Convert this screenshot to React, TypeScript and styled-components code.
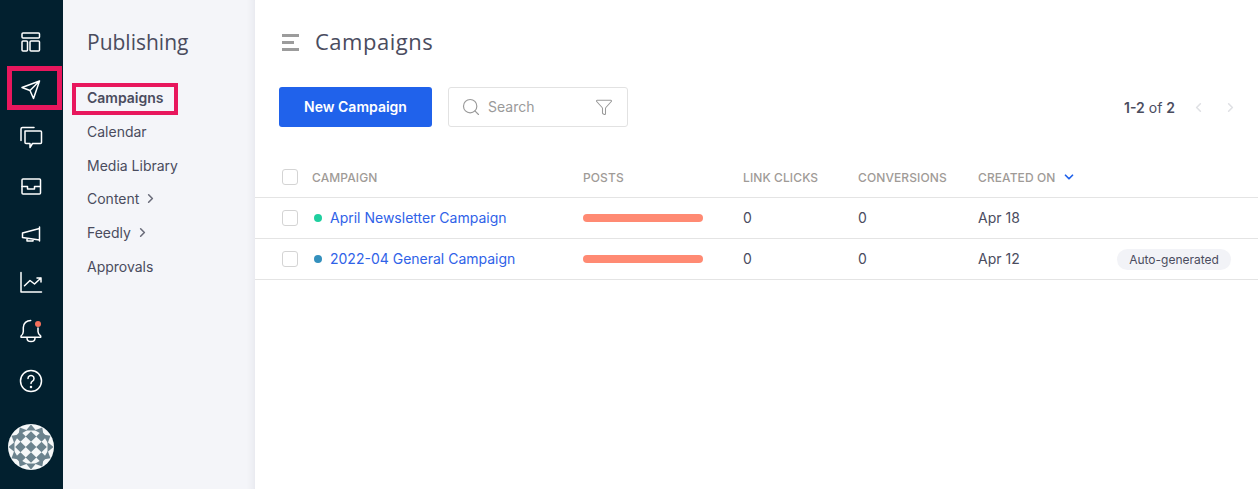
import React from 'react'
import styled, { createGlobalStyle } from 'styled-components'
import { ChevronRight, ChevronLeft, ChevronDown, Search, Filter } from 'lucide-react'

const GlobalStyle = createGlobalStyle`
  html, body {
    margin: 0;
    padding: 0;
    height: 100%;
    background: #fff;
    font-family: Inter, "Liberation Sans", sans-serif;
  }
  #root { height: 100%; }
`

const Page = styled.div`
  display: flex;
  width: 1258px;
  height: 489px;
  overflow: hidden;
`

const Rail = styled.nav`
  position: relative;
  width: 63px;
  flex-shrink: 0;
  background: #02202f;
  display: flex;
  flex-direction: column;
  align-items: center;
  padding: 18px 1px 0 0;
  box-sizing: border-box;
`

const RailIcon = styled.div<{ $nudge?: number }>`
  width: 48px;
  height: 48px;
  margin-top: ${p => p.$nudge || 0}px;
  display: flex;
  align-items: center;
  justify-content: center;
  color: #fff;
`

const RailHighlight = styled.div`
  position: absolute;
  left: 7px;
  top: 66px;
  width: 55px;
  height: 44px;
  box-sizing: border-box;
  border: 5px solid #e8175d;
`

const Avatar = styled.div`
  margin-top: 19px;
  width: 46px;
  height: 46px;
  border-radius: 50%;
  overflow: hidden;
`

const Sidebar = styled.aside`
  position: relative;
  width: 192px;
  flex-shrink: 0;
  background: #f4f5f9;
  box-shadow: inset -10px 0 10px -10px rgba(30, 40, 70, 0.1);
  padding: 28px 0 0 24px;
  box-sizing: border-box;
`

const SidebarTitle = styled.div`
  font-family: "Open Sans", sans-serif;
  font-size: 21px;
  line-height: 28px;
  color: #4a4c5e;
  margin-bottom: 25px;
`

const SideItem = styled.div<{ $active?: boolean }>`
  display: flex;
  align-items: center;
  gap: 4px;
  height: 33.7px;
  font-size: 14px;
  font-weight: ${p => (p.$active ? 600 : 400)};
  color: #4a4c5e;
`

const SideHighlight = styled.div`
  position: absolute;
  left: 9px;
  top: 83px;
  width: 106px;
  height: 32px;
  box-sizing: border-box;
  border: 4px solid #e8175d;
`

const Main = styled.main`
  flex: 1;
  min-width: 0;
  position: relative;
`

const Header = styled.div`
  display: flex;
  align-items: center;
  gap: 16px;
  padding: 28px 0 0 27px;
  height: 28px;
`

const Hamburger = styled.div`
  display: flex;
  flex-direction: column;
  gap: 4px;
  width: 17px;
  & > span {
    display: block;
    height: 3px;
    background: #9c9c9c;
  }
  & > span:nth-child(2) { width: 12px; }
`

const HeaderTitle = styled.h1`
  margin: -2px 0 0;
  font-family: "Open Sans", sans-serif;
  font-weight: 400;
  font-size: 22px;
  letter-spacing: 0.5px;
  line-height: 28px;
  color: #4a4c5e;
`

const Toolbar = styled.div`
  display: flex;
  align-items: center;
  margin: 31px 0 0 24px;
  padding-right: 20px;
  height: 40px;
`

const PrimaryButton = styled.button`
  width: 153px;
  height: 40px;
  border: none;
  border-radius: 3px;
  background: #2062eb;
  color: #fff;
  font-family: inherit;
  font-size: 14px;
  font-weight: 600;
  margin-right: 16px;
  padding: 0 0 2px;
`

const SearchBox = styled.div`
  width: 180px;
  height: 40px;
  box-sizing: border-box;
  border: 1px solid #e2e2e2;
  border-radius: 3px;
  display: flex;
  align-items: center;
  padding: 0 14px 0 12px;
  color: #9a9a9a;
  font-size: 14px;
  gap: 7px;
  & > span { flex: 1; margin-top: -2px; }
`

const Pager = styled.div`
  margin-left: auto;
  display: flex;
  align-items: center;
  font-size: 14px;
  color: #4a4c5e;
  & b { font-weight: 600; }
`

const PagerCount = styled.span`
  margin-right: 16px;
`

const PagerArrows = styled.div`
  display: flex;
  gap: 17px;
  color: #dfe0e4;
`

const Table = styled.div`
  margin-top: 30px;
`

const Row = styled.div`
  display: grid;
  grid-template-columns: 30px 271px 160px 115px 120px 139px 1fr;
  align-items: center;
  height: 40px;
  padding-left: 27px;
  border-bottom: 1px solid #e4e4e4;
  font-size: 14px;
  color: #4a4c5e;
`

const HeadCell = styled.div`
  font-size: 12px;
  font-weight: 500;
  letter-spacing: 0.1px;
  color: #9f9b97;
  display: flex;
  align-items: center;
  gap: 6px;
`

const Cell = styled.div`
  margin-top: -2px;
`

const Check = styled.div`
  width: 16px;
  height: 16px;
  box-sizing: border-box;
  border: 1px solid #d4d4d4;
  border-radius: 3px;
  background: #fff;
`

const CampaignCell = styled.div`
  display: flex;
  align-items: center;
  gap: 8px;
  padding-left: 2px;
  color: #2f62e8;
`

const CampaignName = styled.span`
  margin-top: -2px;
`

const Dot = styled.span<{ $color: string }>`
  width: 8px;
  height: 8px;
  border-radius: 50%;
  background: ${p => p.$color};
`

const Bar = styled.div`
  width: 120px;
  height: 8px;
  border-radius: 4px;
  background: #ff8a73;
`

const Badge = styled.span`
  display: inline-block;
  width: 114px;
  height: 21px;
  line-height: 21px;
  text-align: center;
  border-radius: 11px;
  background: #f2f3f7;
  font-size: 12px;
  color: #4a4c5e;
`

const stroke = { fill: 'none', stroke: 'currentColor', strokeWidth: 1.5, strokeLinejoin: 'round' as const, strokeLinecap: 'round' as const }

const Svg: React.FC<{ children: React.ReactNode }> = ({ children }) => (
  <svg width="24" height="24" viewBox="0 0 24 24" {...stroke}>{children}</svg>
)

const railIcons = [
  {
    key: 'dash',
    icon: (
      <Svg>
        <rect x="3" y="3" width="17.500" height="5" rx="1" />
        <rect x="3" y="11" width="5.500" height="10" rx="1" />
        <rect x="11" y="11" width="9.500" height="10" rx="1" />
      </Svg>
    )
  },
  {
    key: 'send',
    icon: (
      <Svg>
        <path d="M20.500 3 3 9.500l8 3L14.500 20.500zM20.500 3 11 12.500" />
      </Svg>
    )
  },
  {
    key: 'chat',
    icon: (
      <Svg>
        <path d="M2 14.500V3a1.500 1.500 0 0 1 1.500-1.500H15" />
        <path d="M6 5h15.500a1 1 0 0 1 1 1v10.500a1 1 0 0 1-1 1h-8l-2.500 4v-4H7a1 1 0 0 1-1-1z" />
      </Svg>
    )
  },
  {
    key: 'inbox',
    icon: (
      <Svg>
        <rect x="3" y="5" width="18.500" height="15" rx="1" />
        <path d="M3 12.500h5.500v2.500h7v-2.500h5.500" />
      </Svg>
    )
  },
  {
    key: 'mega',
    icon: (
      <Svg>
        <path d="M20.500 5v14M20.500 6.500 3.500 11v4.500l17 2.500M8 16.200v2.800h6v-1.800" />
      </Svg>
    )
  },
  {
    key: 'chart',
    nudge: 1,
    icon: (
      <Svg>
        <path d="M2 1.500V21h20.500" />
        <path d="M5.500 14.700 11 9.500l4.500 3.500L22 7M18 7h4v4" />
      </Svg>
    )
  },
  {
    key: 'bell',
    icon: (
      <svg width="26" height="26" viewBox="0 0 26 26" {...stroke}>
        <path d="M12.700 2.500c-4 0-7.400 2.800-7.400 7v4c0 2.500-1 3.500-2.300 4.500v1.200h19.700V18c-1.300-1-2.700-2-2.700-4.500V10" />
        <path d="M9 20c0 4.800 8 4.800 8 0" />
        <circle cx="20" cy="6" r="3" fill="#f5705c" stroke="none" />
      </svg>
    )
  },
  {
    key: 'help',
    nudge: 2,
    icon: (
      <Svg>
        <circle cx="12" cy="12" r="10.500" />
        <path d="M9 9.500a3 3 0 1 1 4.500 2.600c-1 .6-1.500 1.200-1.500 2.400" />
        <circle cx="12" cy="18" r=".5" />
      </Svg>
    )
  }
]

const diamonds = [-1, 0, 1].flatMap(i => [-1, 0, 1].map(j => [i * 10.5, j * 10.5]))

// triangles round the rim of the avatar
const rim = Array.from({ length: 12 }, (_, i) => (i * 360) / 12)

const AvatarArt = () => (
  <svg width="46" height="46" viewBox="0 0 46 46">
    <rect width="46" height="46" fill="#f6f8f9" />
    {diamonds.map(([x, y]) => (
      <path key={`${x}:${y}`} d={`M${23 + x} ${17.700 + y}l5.300 5.300-5.300 5.300-5.300-5.300z`} fill="#6c838e" />
    ))}
    {rim.map(a => (
      <path key={a} d="M23 0.500l5 6h-10z" fill="#6c838e" transform={`rotate(${a} 23 23)`} />
    ))}
  </svg>
)

const rows = [
  { name: 'April Newsletter Campaign', dot: '#1fcf9f', date: 'Apr 18', auto: false },
  { name: '2022-04 General Campaign', dot: '#3490bd', date: 'Apr 12', auto: true }
]

export default function App() {
  return (
    <Page>
      <GlobalStyle />
      <Rail>
        {railIcons.map(item => (
          <RailIcon key={item.key} $nudge={item.nudge}>{item.icon}</RailIcon>
        ))}
        <Avatar>
          <AvatarArt />
        </Avatar>
        <RailHighlight />
      </Rail>
      <Sidebar>
        <SidebarTitle>Publishing</SidebarTitle>
        <SideItem $active>Campaigns</SideItem>
        <SideItem>Calendar</SideItem>
        <SideItem>Media Library</SideItem>
        <SideItem>Content <ChevronRight size={15} strokeWidth={2.5} color="#6a6c7a" /></SideItem>
        <SideItem>Feedly <ChevronRight size={15} strokeWidth={2.5} color="#6a6c7a" /></SideItem>
        <SideItem>Approvals</SideItem>
        <SideHighlight />
      </Sidebar>
      <Main>
        <Header>
          <Hamburger>
            <span />
            <span />
            <span />
          </Hamburger>
          <HeaderTitle>Campaigns</HeaderTitle>
        </Header>
        <Toolbar>
          <PrimaryButton>New Campaign</PrimaryButton>
          <SearchBox>
            <Search size={20} strokeWidth={1.4} />
            <span>Search</span>
            <Filter size={18} strokeWidth={1.4} />
          </SearchBox>
          <Pager>
            <PagerCount><b>1-2</b> of <b>2</b></PagerCount>
            <PagerArrows>
              <ChevronLeft size={15} strokeWidth={2.5} />
              <ChevronRight size={15} strokeWidth={2.5} />
            </PagerArrows>
          </Pager>
        </Toolbar>
        <Table>
          <Row>
            <Check />
            <HeadCell>CAMPAIGN</HeadCell>
            <HeadCell>POSTS</HeadCell>
            <HeadCell>LINK CLICKS</HeadCell>
            <HeadCell>CONVERSIONS</HeadCell>
            <HeadCell>CREATED ON <ChevronDown size={14} strokeWidth={3} color="#2062eb" /></HeadCell>
            <div />
          </Row>
          {rows.map(r => (
            <Row key={r.name}>
              <Check />
              <CampaignCell><Dot $color={r.dot} /><CampaignName>{r.name}</CampaignName></CampaignCell>
              <div><Bar /></div>
              <Cell>0</Cell>
              <Cell>0</Cell>
              <Cell>{r.date}</Cell>
              <div>{r.auto && <Badge>Auto-generated</Badge>}</div>
            </Row>
          ))}
        </Table>
      </Main>
    </Page>
  )
}
